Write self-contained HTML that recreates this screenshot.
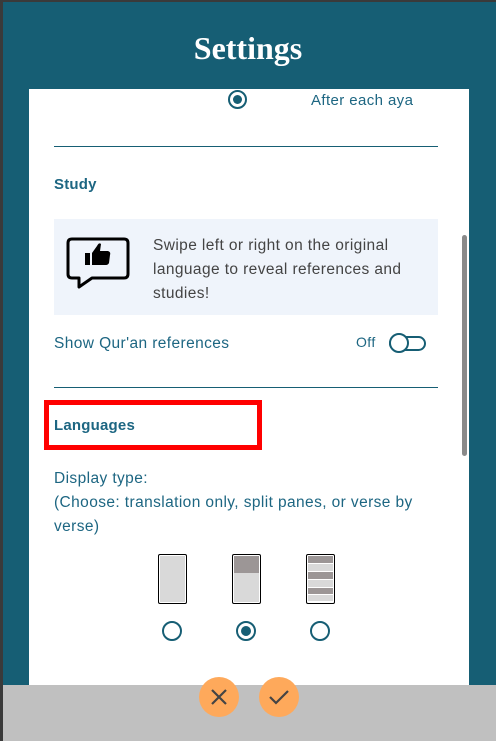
<!DOCTYPE html>
<html><head><meta charset="utf-8"><style>
*{margin:0;padding:0;box-sizing:border-box}
body{width:496px;height:741px;overflow:hidden;background:#165e74;font-family:"Liberation Sans",sans-serif;position:relative}
.abs{position:absolute}
.t{color:#1d6682;font-size:16px;letter-spacing:0.4px}
</style></head><body>
<div class="abs" style="left:0;top:0;width:496px;height:2px;background:#3a3a3a"></div>
<div class="abs" style="left:0;top:0;width:3px;height:741px;background:#3a3a3a"></div>
<div class="abs" style="left:0;top:30px;width:496px;text-align:center;color:#fff;font-family:'Liberation Serif',serif;font-weight:bold;font-size:32px">Settings</div>
<div class="abs" style="left:29px;top:89px;width:440px;height:600px;background:#fff"></div>
<div class="abs" style="left:228px;top:90px;width:19px;height:19px;border:2.5px solid #165e74;border-radius:50%"></div>
<div class="abs" style="left:233px;top:95px;width:9px;height:9px;background:#165e74;border-radius:50%"></div>
<div class="abs t" style="left:311px;top:92px;font-size:15px">After each aya</div>
<div class="abs" style="left:54px;top:146px;width:384px;height:1px;background:#165e74"></div>
<div class="abs t" style="left:54px;top:176px;font-weight:bold;font-size:15px;letter-spacing:0.2px">Study</div>
<div class="abs" style="left:54px;top:219px;width:384px;height:96px;background:#eff4fb"></div>
<svg class="abs" style="left:64px;top:236px" width="68" height="62" viewBox="0 0 68 62">
<path d="M8 3 H60 Q64 3 64 7 V38 Q64 42 60 42 H28 L15 51 V42 H8 Q4 42 4 38 V7 Q4 3 8 3 Z" fill="none" stroke="#000" stroke-width="3" stroke-linejoin="round"/>
<rect x="21" y="17" width="5" height="12" fill="#000"/>
<path d="M28 17 L33 10 Q35 6 37 8 L36 15 H44 Q47 16 46 19 L45 27 Q44 29 42 29 H28 Z" fill="#000"/>
</svg>
<div class="abs" style="left:153px;top:234px;width:285px;color:#444;font-size:15.5px;line-height:24px;letter-spacing:0.4px">Swipe left or right on the original language to reveal references and studies!</div>
<div class="abs t" style="left:54px;top:335px;font-size:15.5px">Show Qur'an references</div>
<div class="abs t" style="left:356px;top:334px;font-size:14px">Off</div>
<div class="abs" style="left:389px;top:336px;width:37px;height:15px;border:2.5px solid #165e74;border-radius:8px"></div>
<div class="abs" style="left:389px;top:333px;width:20px;height:20px;border:2.5px solid #165e74;border-radius:50%;background:#fff"></div>
<div class="abs" style="left:54px;top:387px;width:384px;height:1px;background:#165e74"></div>
<div class="abs" style="left:44px;top:400px;width:218px;height:50px;border:5px solid #f00"></div>
<div class="abs t" style="left:54px;top:417px;font-weight:bold;font-size:15px;letter-spacing:0.2px">Languages</div>
<div class="abs t" style="left:54px;top:467px;font-size:15.5px;line-height:24px;width:390px">Display type:<br>(Choose: translation only, split panes, or verse by verse)</div>
<div class="abs" style="left:158px;top:554px;width:29px;height:50px;border:1.5px solid #000;border-radius:2px;background:#d9d9d9;box-shadow:inset 0 0 0 1px #fff"></div>
<div class="abs" style="left:232px;top:554px;width:29px;height:50px;border:1.5px solid #000;border-radius:2px;background:#d9d9d9;box-shadow:inset 0 0 0 1px #fff;overflow:hidden"><div style="margin:1px;height:17px;background:#9c9696"></div></div>
<div class="abs" style="left:306px;top:554px;width:29px;height:50px;border:1.5px solid #000;border-radius:2px;background:#fff;padding:1px">
<div style="height:7px;background:#9c9696;margin-bottom:1px"></div><div style="height:7px;background:#d9d9d9;margin-bottom:1px"></div>
<div style="height:7px;background:#9c9696;margin-bottom:1px"></div><div style="height:7px;background:#d9d9d9;margin-bottom:1px"></div>
<div style="height:6px;background:#9c9696;margin-bottom:1px"></div><div style="height:6px;background:#d9d9d9"></div></div>
<div class="abs" style="left:162px;top:621px;width:20px;height:20px;border:2px solid #165e74;border-radius:50%"></div>
<div class="abs" style="left:236px;top:621px;width:20px;height:20px;border:2px solid #165e74;border-radius:50%"></div>
<div class="abs" style="left:241px;top:626px;width:10px;height:10px;background:#165e74;border-radius:50%"></div>
<div class="abs" style="left:310px;top:621px;width:20px;height:20px;border:2px solid #165e74;border-radius:50%"></div>
<div class="abs" style="left:462px;top:235px;width:5px;height:221px;background:#8a8a8a;border-radius:3px"></div>
<div class="abs" style="left:3px;top:685px;width:493px;height:56px;background:#c0c0c0"></div>
<div class="abs" style="left:199px;top:677px;width:40px;height:40px;border-radius:50%;background:#fea95b"></div>
<div class="abs" style="left:259px;top:677px;width:40px;height:40px;border-radius:50%;background:#fea95b"></div>
<svg class="abs" style="left:199px;top:677px" width="40" height="40"><path d="M13 13 L27 27 M27 13 L13 27" stroke="#444" stroke-width="2.2"/></svg>
<svg class="abs" style="left:259px;top:677px" width="40" height="40"><path d="M11 20 L17 26 L29 14" fill="none" stroke="#444" stroke-width="2.2"/></svg>
</body></html>
